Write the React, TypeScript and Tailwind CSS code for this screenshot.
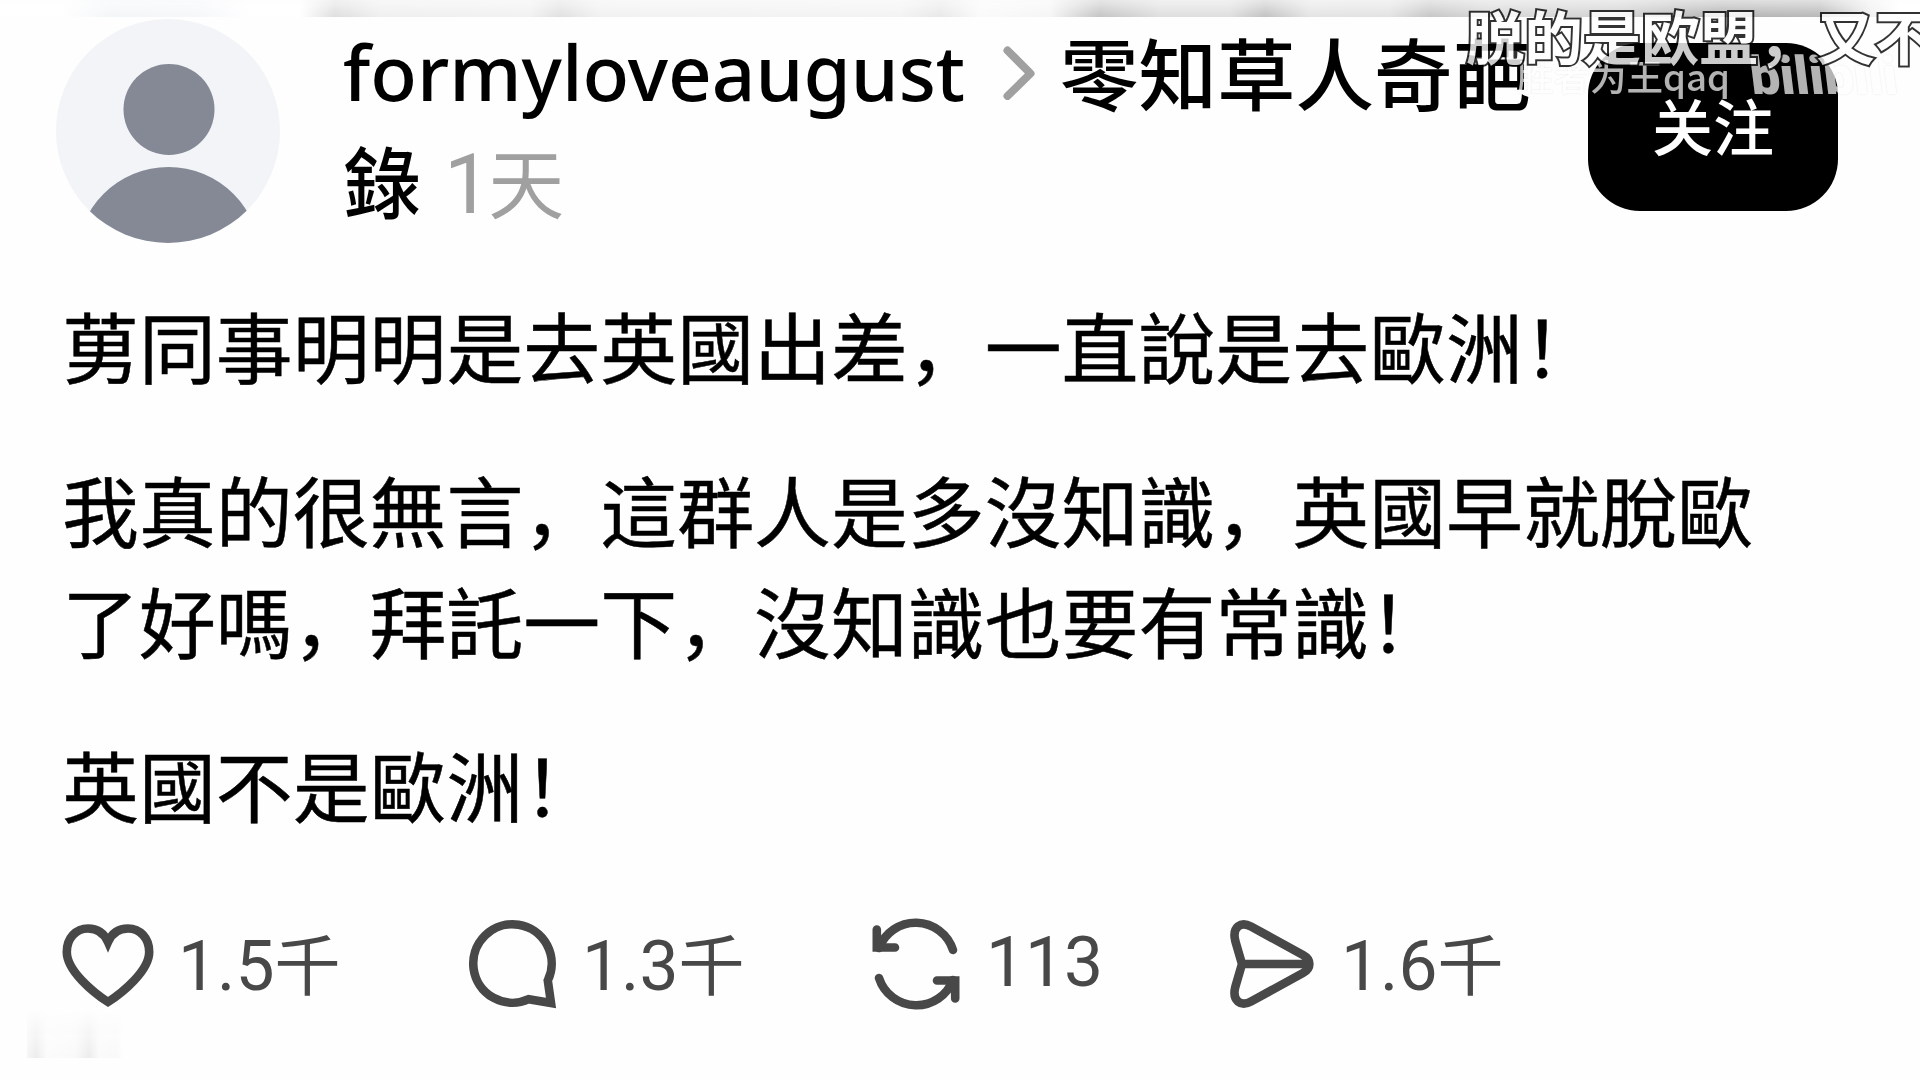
import type { ReactNode } from "react";

const paragraphs = [
  { lines: ["莮同事明明是去英國出差，一直說是去歐洲！"], gap: "mt-0" },
  { lines: ["我真的很無言，這群人是多沒知識，英國早就脫歐", "了好嗎，拜託一下，沒知識也要有常識！"], gap: "mt-[53px]" },
  { lines: ["英國不是歐洲！"], gap: "mt-[53px]" },
];

function Avatar() {
  return (
    <svg viewBox="0 0 224 226" className="h-[226px] w-[224px] shrink-0">
      <defs>
        <clipPath id="face">
          <circle cx="112" cy="114" r="112" />
        </clipPath>
      </defs>
      <circle cx="112" cy="114" r="112" fill="#f2f4f7" />
      <circle cx="113" cy="92.500" r="45.500" fill="#848995" />
      <circle cx="112.500" cy="242" r="92" fill="#848995" clipPath="url(#face)" />
    </svg>
  );
}

type StatProps = {
  count: string;
  unit?: string;
  width: string;
  pad?: string;
  children: ReactNode;
};

function Stat({ count, unit, width, pad = "pl-[22px]", children }: StatProps) {
  return (
    <div className={`flex shrink-0 items-center text-[#484848] ${width}`}>
      <svg viewBox="0 0 96 96" className="h-24 w-24 shrink-0" fill="none" stroke="currentColor" strokeWidth="8.6">
        {children}
      </svg>
      <div className={`${pad} text-[66px] leading-none whitespace-nowrap ${unit ? "mt-[5px]" : "-mt-0.5"}`}>
        <span className="font-['Roboto',sans-serif] text-[69.500px]">{count}</span>
        {unit}
      </div>
    </div>
  );
}

export default function App() {
  return (
    <main className="relative h-[1080px] w-[1920px] overflow-hidden bg-[#fefefe] font-['Noto_Sans_CJK_SC',sans-serif] text-black">
      {/* blurred edge of the previous post */}
      <div className="h-[17px] w-full bg-[linear-gradient(90deg,#fff_60px,#f3f6f8_110px,#f5f7f9_200px,#fff_250px,#fff_300px,#dedede_335px,#efefef_380px,#f1f1f1_530px,#e0e0e0_560px,#f1f1f1_600px,#f3f3f3_900px,#e8e8e8_940px,#fafafa_980px,#f5f5f5_1050px,#c4c4c4_1100px,#dedede_1160px,#dedede_1230px,#c2c2c2_1265px,#e4e4e4_1310px,#e2e2e2_1390px,#c6c6c6_1430px,#d8d8d8_1490px,#d2d2d2_1620px,#b4b4b4_1720px,#b8b8b8_1820px,#f0f0f0_1870px,#fff_1900px)] mask-[linear-gradient(rgba(0,0,0,0.4),#000)]" />

      <header className="flex h-[263px] items-start pl-14">
        <Avatar />
        <div className="ml-[63px] w-[1245px] text-[78px] leading-[110px] font-medium">
          <div className="flex h-[108px] items-center whitespace-nowrap">
            <span className="w-[660px] font-['Noto_Sans',sans-serif] text-[76.400px]">formyloveaugust</span>
            <svg viewBox="0 0 32 54" className="mt-1 h-[54px] w-8" fill="none" stroke="#a0a0a0" strokeWidth="8" strokeLinecap="round" strokeLinejoin="round">
              <path d="M4.500 4.500 27.500 27.500 4.500 50" />
            </svg>
            <span className="ml-[25px] text-[78.500px]">零知草人奇葩</span>
          </div>
          <div className="-mt-px">
            錄
            <span className="ml-[23px] font-normal text-[#a0a0a0]">
              <span className="font-['Roboto',sans-serif] text-[84px] leading-none">1</span>
              <span className="-ml-[3px] text-[76px]">天</span>
            </span>
          </div>
        </div>
        <button className="mt-[26px] h-[168px] w-[250px] shrink-0 rounded-[52px] bg-black pb-1 text-[61px] font-medium text-white">关注</button>
      </header>

      <section className="pt-[9px] pl-[62px] text-[76.9px] leading-[111px] [-webkit-text-stroke:0.5px_#000]">
        {paragraphs.map((p) => (
          <div key={p.lines[0]} className={p.gap}>
            {p.lines.map((line) => (
              <p key={line} className="whitespace-nowrap">{line}</p>
            ))}
          </div>
        ))}
      </section>

      <footer className="flex pt-[75px] pl-[60px]">
        <Stat count="1.5" unit="千" width="w-[404px]">
          <path d="M48 88C34 79 6.800 57 6.800 38 6.800 24 16 14.500 28 14.500 38 14.500 44.500 20 48 28 51.500 20 58 14.500 68 14.500 80 14.500 89.200 24 89.200 38 89.200 57 62 79 48 88Z" />
        </Stat>
        <Stat count="1.3" unit="千" width="w-[404px]">
          <path d="M64.700 85.200A39.200 39.200 0 1 1 83.800 66.500L87 89Z" />
        </Stat>
        <Stat count="113" width="w-[360px]">
          <g strokeLinecap="round">
            <path d="M85 36A39.200 39.200 0 0 0 11 34" />
            <path d="M8.800 15.500V33.500H27" />
            <path d="M11 64A39.200 39.200 0 0 0 85 66" />
            <path d="M87.200 84.500V66.500H69" />
          </g>
        </Stat>
        <Stat count="1.6" unit="千" width="w-[300px]" pad="pl-[17px]">
          <path d="M14 50 7.300 27C3.800 13 13 7 23 12.500L75 41C83.500 45.500 83.500 54.500 75 59L23 87.500C13 93 3.800 87 7.300 73ZM14 50H80" strokeLinejoin="round" />
        </Stat>
      </footer>

      {/* leftover smudge under the actions */}
      <div className="absolute top-[1010px] left-[27px] h-12 w-24 bg-[linear-gradient(90deg,#f6f6f6,#ececec_9px,#fbfbfb_20px,#f9f9f9_48px,#ececec_62px,#fafafa_72px,#f9f9f9_90px,#fefefe)] mask-[linear-gradient(transparent,#000)]" />

      {/* uploader watermark */}
      <div className="absolute top-[52px] left-[1517px] text-[36.500px] leading-[48px] font-medium whitespace-nowrap text-white opacity-70 [text-shadow:0_0_2px_rgba(0,0,0,0.15)]">
        胜者为王qaq
      </div>
      <div className="absolute top-[46px] left-[1750px] skew-x-[7deg] font-['Roboto',sans-serif] text-[53px] leading-[60px] font-black text-white opacity-70 [text-shadow:0_0_2px_rgba(0,0,0,0.15)]">
        bilibili
      </div>

      {/* floating comment */}
      <div className="absolute -top-[3px] left-[1466px] text-[58.400px] leading-[76px] font-bold whitespace-nowrap text-white opacity-80 [-webkit-text-stroke:4px_#000] [paint-order:stroke_fill]">
        脱的是欧盟，又不
      </div>
    </main>
  );
}
